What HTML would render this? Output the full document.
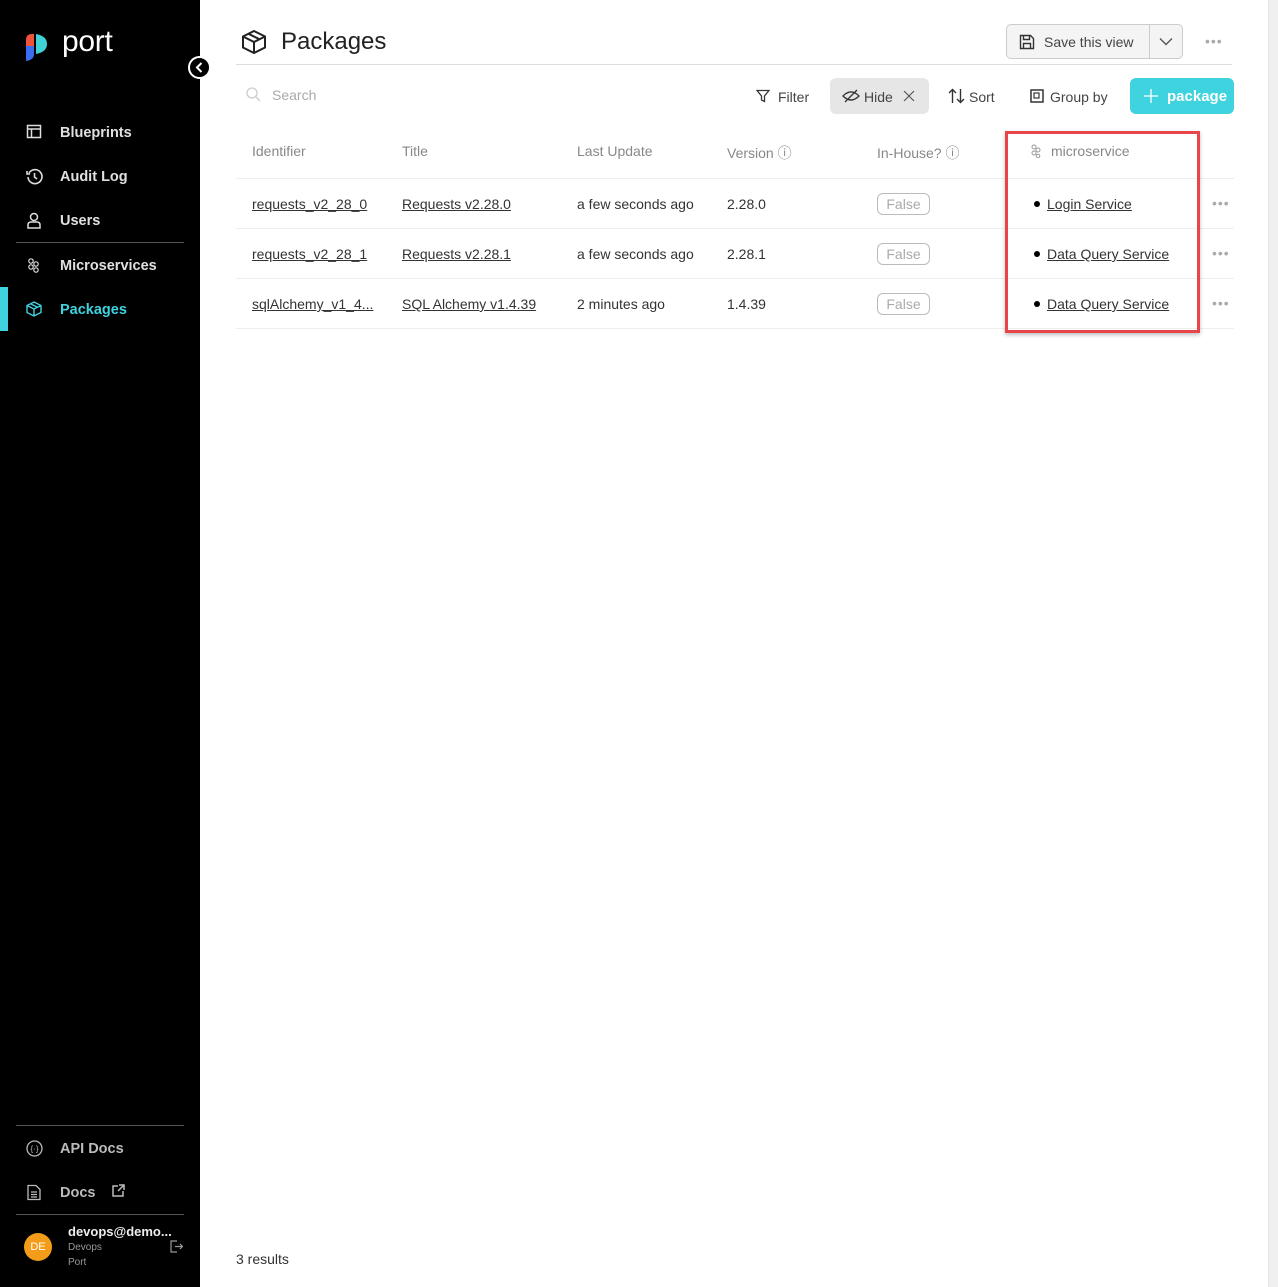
<!DOCTYPE html>
<html><head><style>
*{box-sizing:border-box;margin:0;padding:0}
body{width:1278px;height:1287px;font-family:"Liberation Sans",sans-serif;background:#fff;position:relative;overflow:hidden;color:#333}
.sb{position:absolute;left:0;top:0;width:200px;height:1287px;background:#000;color:#e6e6e6}
.nav{position:absolute;left:60px;font-size:14.5px;font-weight:bold;color:#e0e0e0}
.ic{position:absolute;left:26px}
.t{position:absolute;font-size:14px;white-space:nowrap}
.u{text-decoration:underline;color:#333}
.hr{position:absolute;left:236px;width:998px;height:1px;background:#eee}
.badge{position:absolute;left:877px;width:53px;height:22px;border:1px solid #bbb;border-radius:6px;color:#aaa;font-size:14px;text-align:center;line-height:20px}
.dots{position:absolute;left:1212px;color:#aaa;font-size:14px;letter-spacing:1px}
.bul{position:absolute;left:1034px;width:6px;height:6px;border-radius:50%;background:#000}
</style></head><body>
<div class="sb">
 <svg style="position:absolute;left:24px;top:32px" width="24" height="30" viewBox="0 0 24 30"><path d="M2 8 Q2 2 8 2 L10 2 L10 14 L2 14Z" fill="#f0533c"/><path d="M2 14 L10 14 L10 22 Q10 28 2 29Z" fill="#3b6cf2"/><path d="M12 2 Q23 4 23 12 Q23 20 12 22Z" fill="#3fd2d6"/></svg>
 <div style="position:absolute;left:62px;top:25px;font-size:30px;color:#fff;letter-spacing:-0.3px">port</div>
 <svg class="ic" style="top:124px" width="16" height="16"><rect x="1.5" y="1.5" width="13" height="12" fill="none" stroke="#ddd" stroke-width="1.5"/><path d="M1.5 5h13M5.5 5v8.5" stroke="#ddd" stroke-width="1.5"/></svg>
 <div class="nav" style="top:125px">Blueprints</div>
 <svg class="ic" style="top:168px" width="17" height="17"><path d="M3 5A7 7 0 1 1 2 9M1 3v3h3M8.5 5v4l2.5 2" fill="none" stroke="#ddd" stroke-width="1.6"/></svg>
 <div class="nav" style="top:169px">Audit Log</div>
 <svg class="ic" style="top:212px" width="16" height="17"><circle cx="8" cy="5" r="3.5" fill="none" stroke="#ddd" stroke-width="1.5"/><path d="M2 16v-3q0-3 3-3h6q3 0 3 3v3z" fill="none" stroke="#ddd" stroke-width="1.5"/></svg>
 <div class="nav" style="top:213px">Users</div>
 <div style="position:absolute;left:16px;top:242px;width:168px;height:1px;background:#555"></div>
 <svg class="ic" style="top:257px" width="16" height="16"><g fill="none" stroke="#ddd" stroke-width="1.2"><circle cx="5" cy="4" r="2.2"/><circle cx="10" cy="7" r="2.2"/><circle cx="5" cy="10" r="2.2"/><circle cx="10" cy="13" r="2.2"/></g></svg>
 <div class="nav" style="top:258px">Microservices</div>
 <div style="position:absolute;left:0;top:287px;width:8px;height:44px;background:#3fd2df"></div>
 <svg class="ic" style="top:301px" width="16" height="16"><path d="M8 1L15 4.5V11.5L8 15L1 11.5V4.5Z M1 4.5L8 8L15 4.5 M8 8V15 M4.5 2.8L11.5 6.3" fill="none" stroke="#3fd2df" stroke-width="1.4"/></svg>
 <div class="nav" style="top:302px;color:#3fd2df">Packages</div>
 <div style="position:absolute;left:16px;top:1125px;width:168px;height:1px;background:#555"></div>
 <svg class="ic" style="top:1140px" width="17" height="17"><circle cx="8.5" cy="8.5" r="7.5" fill="none" stroke="#bbb" stroke-width="1.3"/><text x="8.5" y="11.5" font-size="8" text-anchor="middle" fill="#bbb">{·}</text></svg>
 <div class="nav" style="top:1141px;color:#bbb">API Docs</div>
 <svg class="ic" style="top:1184px" width="16" height="17"><path d="M2 1.5h8l4 4v10H2z M5 8h6M5 10.5h6M5 13h6" fill="none" stroke="#bbb" stroke-width="1.3"/></svg>
 <div class="nav" style="top:1185px;color:#bbb">Docs</div>
 <svg style="position:absolute;left:111px;top:1184px" width="14" height="14"><path d="M7 2H2v10h10V7M8 1h5v5M13 1L7 7" fill="none" stroke="#bbb" stroke-width="1.5"/></svg>
 <div style="position:absolute;left:16px;top:1214px;width:168px;height:1px;background:#555"></div>
 <div style="position:absolute;left:24px;top:1233px;width:28px;height:28px;border-radius:50%;background:#f39c1a;color:#fff;font-size:11px;text-align:center;line-height:28px">DE</div>
 <div style="position:absolute;left:68px;top:1224px;font-size:13px;font-weight:bold;color:#eee">devops@demo...</div>
 <div style="position:absolute;left:68px;top:1242px;font-size:10px;color:#999">Devops</div>
 <div style="position:absolute;left:68px;top:1257px;font-size:10px;color:#999">Port</div>
 <svg style="position:absolute;left:170px;top:1240px" width="13" height="13"><path d="M7 1H1v11h6M5 6.5h7M10 4l2.5 2.5L10 9" fill="none" stroke="#999" stroke-width="1.2"/></svg>
</div>
<div style="position:absolute;left:188px;top:56px;width:23px;height:23px;border-radius:50%;background:#000;border:2px solid #fff"></div>
<svg style="position:absolute;left:188px;top:56px" width="23" height="23"><path d="M13.5 7L9 11.5L13.5 16" fill="none" stroke="#fff" stroke-width="2"/></svg>

<svg style="position:absolute;left:241px;top:29px" width="26" height="26"><path d="M13 2L24 7.5V18.5L13 24L2 18.5V7.5Z M2 7.5L13 13L24 7.5 M13 13V24 M7.5 4.8L18.5 10.3" fill="none" stroke="#222" stroke-width="2"/></svg>
<div class="t" style="left:281px;top:28px;font-size:24px;color:#222">Packages</div>
<div style="position:absolute;left:1006px;top:24px;width:177px;height:35px;border:1px solid #ccc;border-radius:5px;background:#f4f4f4"></div>
<div style="position:absolute;left:1149px;top:24px;width:1px;height:35px;background:#ccc"></div>
<svg style="position:absolute;left:1019px;top:34px" width="16" height="16"><path d="M1.5 1.5h10l3 3v10h-13z M4.5 1.5v4h6v-4 M4.5 14.5v-5h7v5" fill="none" stroke="#333" stroke-width="1.4"/></svg>
<div class="t" style="left:1044px;top:34px;color:#444">Save this view</div>
<svg style="position:absolute;left:1159px;top:37px" width="14" height="9"><path d="M1 1.5l6 6 6-6" fill="none" stroke="#555" stroke-width="1.4"/></svg>
<div class="dots" style="left:1205px;top:33px">•••</div>
<div style="position:absolute;left:236px;top:64px;width:996px;height:1px;background:#ddd"></div>

<svg style="position:absolute;left:246px;top:87px" width="15" height="15"><circle cx="6" cy="6" r="5" fill="none" stroke="#ccc" stroke-width="1.3"/><path d="M10 10l4 4" stroke="#ccc" stroke-width="1.3"/></svg>
<div class="t" style="left:272px;top:87px;color:#aaa">Search</div>
<svg style="position:absolute;left:756px;top:89px" width="14" height="14"><path d="M1 1.5h12L8.5 7v5.5L5.5 11V7z" fill="none" stroke="#333" stroke-width="1.3"/></svg>
<div class="t" style="left:778px;top:89px;color:#444">Filter</div>
<div style="position:absolute;left:830px;top:78px;width:99px;height:36px;border-radius:6px;background:#e6e6e6"></div>
<svg style="position:absolute;left:842px;top:89px" width="18" height="14"><path d="M1 7Q9 -1 17 7Q9 15 1 7Z M3 13L15 1" fill="none" stroke="#333" stroke-width="1.3"/></svg>
<div class="t" style="left:864px;top:89px;color:#444">Hide</div>
<svg style="position:absolute;left:903px;top:90px" width="12" height="12"><path d="M1 1l10 10M11 1L1 11" stroke="#555" stroke-width="1.2"/></svg>
<svg style="position:absolute;left:948px;top:88px" width="17" height="16"><path d="M4.5 15V1.5M1 5l3.5-3.5L8 5M12.5 1v13.5M9 11l3.5 3.5L16 11" fill="none" stroke="#333" stroke-width="1.4"/></svg>
<div class="t" style="left:969px;top:89px;color:#444">Sort</div>
<svg style="position:absolute;left:1030px;top:89px" width="14" height="14"><rect x="1" y="1" width="12" height="12" fill="none" stroke="#333" stroke-width="1.5"/><rect x="4" y="4" width="5" height="5" fill="none" stroke="#333" stroke-width="1.2"/></svg>
<div class="t" style="left:1050px;top:89px;color:#444">Group by</div>
<div style="position:absolute;left:1130px;top:78px;width:104px;height:36px;border-radius:6px;background:#3fd2df"></div>
<svg style="position:absolute;left:1143px;top:88px" width="16" height="16"><path d="M8 1v14M1 8h14" stroke="#fff" stroke-width="1.3"/></svg>
<div class="t" style="left:1167px;top:88px;color:#fff;font-weight:bold;font-size:15px">package</div>

<div class="t" style="left:252px;top:143px;color:#888">Identifier</div>
<div class="t" style="left:402px;top:143px;color:#888">Title</div>
<div class="t" style="left:577px;top:143px;color:#888">Last Update</div>
<div class="t" style="left:727px;top:143px;color:#888">Version ⓘ</div>
<div class="t" style="left:877px;top:143px;color:#888">In-House? ⓘ</div>
<svg style="position:absolute;left:1030px;top:144px" width="12" height="14"><g fill="none" stroke="#999" stroke-width="1"><circle cx="4" cy="3" r="2"/><circle cx="8" cy="6" r="2"/><circle cx="4" cy="9" r="2"/><circle cx="8" cy="12" r="1.8"/></g></svg>
<div class="t" style="left:1051px;top:143px;color:#888">microservice</div>
<div class="hr" style="top:178px"></div>
<div class="hr" style="top:228px"></div>
<div class="hr" style="top:278px"></div>
<div class="hr" style="top:328px"></div>

<div class="t u" style="left:252px;top:196px">requests_v2_28_0</div>
<div class="t u" style="left:402px;top:196px">Requests v2.28.0</div>
<div class="t" style="left:577px;top:196px">a few seconds ago</div>
<div class="t" style="left:727px;top:196px">2.28.0</div>
<div class="badge" style="top:193px">False</div>
<div class="bul" style="top:201px"></div>
<div class="t u" style="left:1047px;top:196px">Login Service</div>
<div class="dots" style="top:195px">•••</div>

<div class="t u" style="left:252px;top:246px">requests_v2_28_1</div>
<div class="t u" style="left:402px;top:246px">Requests v2.28.1</div>
<div class="t" style="left:577px;top:246px">a few seconds ago</div>
<div class="t" style="left:727px;top:246px">2.28.1</div>
<div class="badge" style="top:243px">False</div>
<div class="bul" style="top:251px"></div>
<div class="t u" style="left:1047px;top:246px">Data Query Service</div>
<div class="dots" style="top:245px">•••</div>

<div class="t u" style="left:252px;top:296px">sqlAlchemy_v1_4...</div>
<div class="t u" style="left:402px;top:296px">SQL Alchemy v1.4.39</div>
<div class="t" style="left:577px;top:296px">2 minutes ago</div>
<div class="t" style="left:727px;top:296px">1.4.39</div>
<div class="badge" style="top:293px">False</div>
<div class="bul" style="top:301px"></div>
<div class="t u" style="left:1047px;top:296px">Data Query Service</div>
<div class="dots" style="top:295px">•••</div>

<div style="position:absolute;left:1005px;top:131px;width:195px;height:202px;border:3px solid #e8454a;box-shadow:0 2px 4px rgba(0,0,0,0.25)"></div>
<div class="t" style="left:236px;top:1251px">3 results</div>
<div style="position:absolute;left:1268px;top:0;width:10px;height:1287px;background:#f0f0f0;border-left:1px solid #e4e4e4"></div>
</body></html>
